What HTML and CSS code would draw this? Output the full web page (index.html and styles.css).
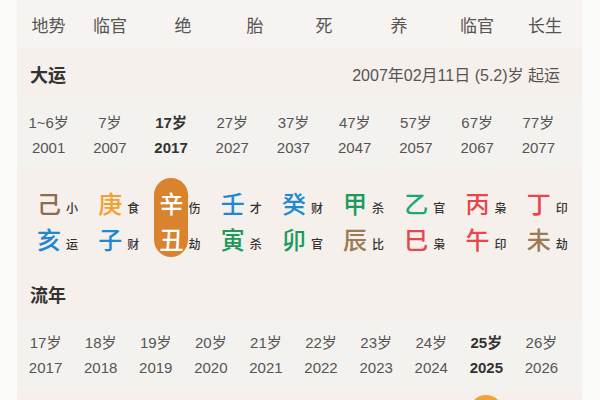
FILE: index.html
```html
<!DOCTYPE html>
<html lang="zh">
<head>
<meta charset="utf-8">
<link rel="stylesheet" href="styles.css">
</head>
<body>
<div class="page">
  <div class="card">
    <div class="dishi">
      <span>地势</span><span>临官</span><span>绝</span><span>胎</span><span>死</span><span>养</span><span>临官</span><span>长生</span>
    </div>

    <div class="head">
      <span class="title">大运</span>
      <span class="meta">2007年02月11日 (5.2)岁 起运</span>
    </div>

    <div class="ages grid9">
      <div class="age"><span>1~6岁</span><span>2001</span></div>
      <div class="age"><span>7岁</span><span>2007</span></div>
      <div class="age cur"><span>17岁</span><span>2017</span></div>
      <div class="age"><span>27岁</span><span>2027</span></div>
      <div class="age"><span>37岁</span><span>2037</span></div>
      <div class="age"><span>47岁</span><span>2047</span></div>
      <div class="age"><span>57岁</span><span>2057</span></div>
      <div class="age"><span>67岁</span><span>2067</span></div>
      <div class="age"><span>77岁</span><span>2077</span></div>
    </div>

    <div class="pillars grid9">
      <div class="pillar">
        <div class="gz"><span class="earth">己</span><span class="water">亥</span></div>
        <div class="tags"><span>小</span><span>运</span></div>
      </div>
      <div class="pillar">
        <div class="gz"><span class="metal">庚</span><span class="water">子</span></div>
        <div class="tags"><span>食</span><span>财</span></div>
      </div>
      <div class="pillar">
        <div class="gz active"><span>辛</span><span>丑</span></div>
        <div class="tags"><span>伤</span><span>劫</span></div>
      </div>
      <div class="pillar">
        <div class="gz"><span class="water">壬</span><span class="wood">寅</span></div>
        <div class="tags"><span>才</span><span>杀</span></div>
      </div>
      <div class="pillar">
        <div class="gz"><span class="water">癸</span><span class="wood">卯</span></div>
        <div class="tags"><span>财</span><span>官</span></div>
      </div>
      <div class="pillar">
        <div class="gz"><span class="wood">甲</span><span class="earth2">辰</span></div>
        <div class="tags"><span>杀</span><span>比</span></div>
      </div>
      <div class="pillar">
        <div class="gz"><span class="wood2">乙</span><span class="fire">巳</span></div>
        <div class="tags"><span>官</span><span>枭</span></div>
      </div>
      <div class="pillar">
        <div class="gz"><span class="fire">丙</span><span class="fire">午</span></div>
        <div class="tags"><span>枭</span><span>印</span></div>
      </div>
      <div class="pillar">
        <div class="gz"><span class="fire">丁</span><span class="earth2">未</span></div>
        <div class="tags"><span>印</span><span>劫</span></div>
      </div>
    </div>

    <div class="head">
      <span class="title">流年</span>
    </div>

    <div class="years grid10">
      <div class="age"><span>17岁</span><span>2017</span></div>
      <div class="age"><span>18岁</span><span>2018</span></div>
      <div class="age"><span>19岁</span><span>2019</span></div>
      <div class="age"><span>20岁</span><span>2020</span></div>
      <div class="age"><span>21岁</span><span>2021</span></div>
      <div class="age"><span>22岁</span><span>2022</span></div>
      <div class="age"><span>23岁</span><span>2023</span></div>
      <div class="age"><span>24岁</span><span>2024</span></div>
      <div class="age cur"><span>25岁</span><span>2025</span></div>
      <div class="age"><span>26岁</span><span>2026</span></div>
    </div>

    <div class="next grid10">
      <div></div><div></div><div></div><div></div><div></div><div></div><div></div><div></div>
      <div class="next-cell"><div class="next-pill"></div></div>
      <div></div>
    </div>
  </div>
</div>
</body>
</html>
```

FILE: styles.css
```css
html, body {
  margin: 0;
  padding: 0;
  background: #fafaf9;
}

body {
  font-family: "Liberation Sans", "Noto Sans CJK SC", sans-serif;
  color: #555;
}

.page {
  width: 600px;
  height: 400px;
  overflow: hidden;
  padding-left: 17px;
  box-sizing: border-box;
}

.card {
  width: 565px;
  background: #f5f2ef;
}

.dishi {
  display: grid;
  grid-template-columns: 63px 60px 86px 58px 80px 70px 86px 50px;
  height: 48px;
  align-items: center;
  background: #f6f3f0;
  font-size: 17px;
  color: #555;
}

.dishi span {
  text-align: center;
}

.head {
  height: 52px;
  display: flex;
  align-items: center;
  justify-content: space-between;
  padding: 0 22px 0 13px;
  background: #f6f0ec;
}

.title {
  font-size: 18px;
  font-weight: 700;
  color: #333;
}

.meta {
  font-size: 16px;
  color: #555;
}

.grid9,
.grid10 {
  display: grid;
  padding: 0 13px 0 1px;
}

.grid9 {
  grid-template-columns: repeat(9, 1fr);
}

.grid10 {
  grid-template-columns: repeat(10, 1fr);
}

.ages {
  padding-top: 10px;
  padding-bottom: 8px;
  background: #f4f2ef;
}

.years {
  padding-top: 10px;
  padding-bottom: 12px;
  background: #f4f2ef;
}

.age {
  display: flex;
  flex-direction: column;
  align-items: center;
  font-size: 15px;
  line-height: 25px;
  color: #555;
}

.age.cur {
  font-weight: 700;
  color: #333;
}

.pillars {
  padding-top: 10px;
  padding-bottom: 11px;
  background: #f6f0ec;
}

.pillar {
  display: flex;
  height: 79px;
  padding-left: 14px;
}

.gz {
  width: 34px;
  height: 79px;
  box-sizing: border-box;
  padding-top: 7px;
  border-radius: 17px;
  display: flex;
  flex-direction: column;
  align-items: center;
  font-family: "Noto Sans CJK SC", sans-serif;
  font-size: 24px;
  font-weight: 500;
  line-height: 36px;
}

.gz.active {
  background: #d9832f;
  color: #fff;
}

.tags {
  display: flex;
  flex-direction: column;
  height: 79px;
  box-sizing: border-box;
  padding-top: 12px;
  font-family: "Noto Sans CJK SC", sans-serif;
  font-size: 12px;
  font-weight: 500;
  line-height: 36px;
  color: #333;
}

.earth { color: #8d6c4c; }
.earth2 { color: #9a7b55; }
.metal { color: #f2a12e; }
.water { color: #1f88d0; }
.wood { color: #1a9a5c; }
.wood2 { color: #1fa57a; }
.fire { color: #e8464a; }

.next {
  height: 20px;
  background: #f7efeb;
}

.next-cell {
  display: flex;
  justify-content: center;
  padding-top: 3px;
}

.next-pill {
  width: 34px;
  height: 60px;
  border-radius: 17px;
  background: #f0a23c;
}
```
